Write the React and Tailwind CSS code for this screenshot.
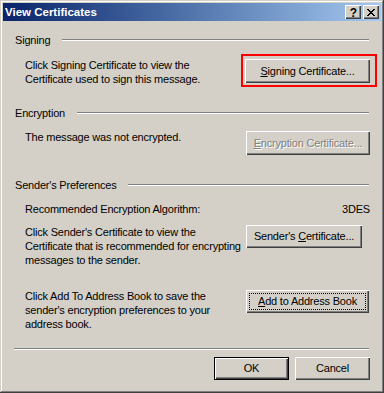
import React from "react";

const bevel =
  "bg-[#d4d0c8] shadow-[inset_1px_1px_#ffffff,inset_-1px_-1px_#404040,inset_-2px_-2px_#808080]";

function Btn({ w, h = "h-[23px]", children, disabled, def, focus, extra = "" }) {
  return (
    <div
      className={`${w} ${h} ${extra} shrink-0 ${
        def ? "border border-black" : ""
      } box-border`}
    >
      <div className={`relative w-full h-full flex items-center justify-center ${bevel}`}>
        {focus && (
          <div className="absolute left-[3px] top-[3px] right-[3px] bottom-[3px] border border-dotted border-black" />
        )}
        <span
          className={`text-[11px] leading-[13px] whitespace-nowrap ${
            disabled ? "text-[#808080] [text-shadow:1px_1px_#ffffff]" : "text-black"
          }`}
        >
          {children}
        </span>
      </div>
    </div>
  );
}

function Heading({ children }) {
  return (
    <div className="flex items-center h-[14px]">
      <span className="leading-[14px]">{children}</span>
      <div className="flex-1 ml-[12px] mr-[1px] h-[2px] border-t border-b border-t-[#808080] border-b-white" />
    </div>
  );
}

export default function App() {
  return (
    <div
      className="w-[384px] h-[393px] bg-[#d4d0c8] p-[3px] box-border shadow-[inset_-1px_-1px_#404040,inset_1px_1px_#d4d0c8,inset_-2px_-2px_#808080,inset_2px_2px_#ffffff] text-black text-[11px]"
      style={{ fontFamily: '"Liberation Sans", Arial, sans-serif' }}
    >
      {/* Title bar */}
      <div className="h-[18px] flex items-center bg-gradient-to-r from-[#0a246a] to-[#a6caf0] pl-[2px] pr-[2px]">
        <span className="text-white font-bold text-[11.5px] leading-[14px] flex-1">
          View Certificates
        </span>
        <div className={`w-[16px] h-[14px] flex items-center justify-center ${bevel}`}>
          <span className="font-bold text-[12px] leading-[12px] mt-[1px] ml-[1px]">?</span>
        </div>
        <div className={`w-[16px] h-[14px] ml-[2px] flex items-center justify-center ${bevel}`}>
          <svg width="8" height="7" viewBox="0 0 8 7">
            <path
              d="M0 0h2v1h1v1h2V1h1V0h2v1H7v1H6v1H5v1h1v1h1v1h1v1H6V6H5V5H3v1H2v1H0V6h1V5h1V4h1V3H2V2H1V1H0z"
              fill="#000"
            />
          </svg>
        </div>
      </div>

      {/* Content */}
      <div className="pl-[12px] pr-[11px] pt-[12px] leading-[14px] whitespace-nowrap tracking-[-0.2px]">
        <Heading>Signing</Heading>

        <div className="flex mt-[11px]">
          <div className="ml-[10px] w-[220px]">
            <div>Click Signing Certificate to view the</div>
            <div>Certificate used to sign this message.</div>
          </div>
          <div className="relative">
            <Btn w="w-[125px]" h="h-[24px]" extra="mt-[1px]">
              <span className="underline">S</span>igning Certificate...
            </Btn>
            <div className="absolute left-[-4px] top-[-4px] w-[136px] h-[33px] border-2 border-[#ff0000] box-border" />
          </div>
        </div>

        <div className="mt-[20px]">
          <Heading>Encryption</Heading>
        </div>

        <div className="flex mt-[10px]">
          <div className="ml-[10px] w-[221px]">The message was not encrypted.</div>
          <Btn w="w-[124px]" h="h-[24px]" disabled extra="mt-[1px]">
            <span className="underline">E</span>ncryption Certificate...
          </Btn>
        </div>

        <div className="mt-[23px]">
          <Heading>Sender's Preferences</Heading>
        </div>

        <div className="flex justify-between mt-[10px] ml-[10px]">
          <span>Recommended Encryption Algorithm:</span>
          <span>3DES</span>
        </div>

        <div className="flex mt-[9px]">
          <div className="ml-[10px] w-[221px]">
            <div>Click Sender's Certificate to view the</div>
            <div>Certificate that is recommended for encrypting</div>
            <div>messages to the sender.</div>
          </div>
          <Btn w="w-[116px]">
            Sender's <span className="underline">C</span>ertificate...
          </Btn>
        </div>

        <div className="flex mt-[22px]">
          <div className="ml-[10px] w-[221px]">
            <div>Click Add To Address Book to save the</div>
            <div>sender's encryption preferences to your</div>
            <div>address book.</div>
          </div>
          <Btn w="w-[123px]" focus extra="mt-[1px]">
            <span className="underline">A</span>dd to Address Book
          </Btn>
        </div>

        <div className="mt-[17px] ml-[-1px] mr-[1px] h-[2px] border-t border-b border-t-[#808080] border-b-white" />

        <div className="flex justify-end gap-[6px] mt-[7px]">
          <Btn w="w-[75px]" def>
            OK
          </Btn>
          <Btn w="w-[75px]">Cancel</Btn>
        </div>
      </div>
    </div>
  );
}
